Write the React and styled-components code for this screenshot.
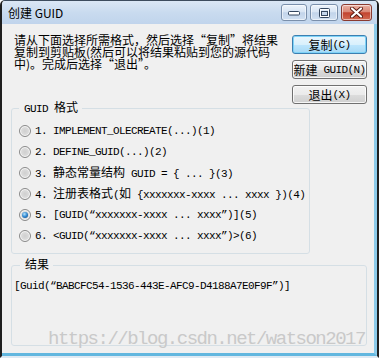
import React from 'react';
import styled, { createGlobalStyle } from 'styled-components';

// 폰트
const CJK = '"Noto Sans CJK SC", "Noto Sans", sans-serif';
const MONO = '"Liberation Mono", "Noto Sans CJK SC", monospace';

const GlobalStyle = createGlobalStyle`
    html, body { margin : 0; padding : 0; background : #ffffff; }
    #root { width : 379px; height : 358px; }
`;

// 중문 텍스트 조각
const Cn = styled.span`
    font-family : ${CJK};
    font-size : 12px;
    letter-spacing : 0;
`;

const FORMATS = [
    { id : 1, label : <>1. IMPLEMENT_OLECREATE(...)(1)</> },
    { id : 2, label : <>2. DEFINE_GUID(...)(2)</> },
    { id : 3, label : <>3. <Cn>静态常量结构</Cn> GUID = {'{'} ... {'}'}(3)</> },
    { id : 4, label : <>4. <Cn>注册表格式</Cn>(<Cn>如</Cn> {'{'}xxxxxxx-xxxx ... xxxx {'}'})(4)</> },
    { id : 5, label : <>5. [GUID(“xxxxxxx-xxxx ... xxxx”)](5)</> },
    { id : 6, label : <>6. &lt;GUID(“xxxxxxx-xxxx ... xxxx”)&gt;(6)</> },
];

const App = () => {
    const selected = 5;

    return (
        <>
            <GlobalStyle />
            <Window>
                {/* 타이틀 바 */}
                <TitleBar>
                    <TitleText>创建 GUID</TitleText>
                    <CaptionButtons>
                        <CaptionButton $w={26}>
                            <svg width="12" height="6" viewBox="0 0 12 6">
                                <rect x="0.5" y="1.5" width="11" height="3.5" rx="1" fill="#fff" stroke="#34465e" />
                            </svg>
                        </CaptionButton>
                        <CaptionButton $w={28}>
                            <svg width="11" height="10" viewBox="0 0 11 10">
                                <rect x="0.5" y="0.5" width="10" height="9" rx="1" fill="none" stroke="#34465e" />
                                <rect x="1.5" y="1.5" width="8" height="7" fill="none" stroke="#fff" />
                                <rect x="2.5" y="3.5" width="6" height="4" fill="none" stroke="#34465e" />
                            </svg>
                        </CaptionButton>
                        <CaptionButton $w={31} $close>
                            <svg width="13" height="11" viewBox="0 0 13 11">
                                <path d="M2 1.5 L11 9.5 M11 1.5 L2 9.5" stroke="#5a1a12" strokeWidth="4" strokeLinecap="round" />
                                <path d="M2 1.5 L11 9.5 M11 1.5 L2 9.5" stroke="#fff" strokeWidth="2.2" strokeLinecap="round" />
                            </svg>
                        </CaptionButton>
                    </CaptionButtons>
                </TitleBar>

                {/* 클라이언트 영역 */}
                <Client>
                    <TopRow>
                        <Intro>
                            请从下面选择所需格式，然后选择“复制”将结果<br />
                            复制到剪贴板(然后可以将结果粘贴到您的源代码<br />
                            中)。完成后选择“退出”。
                        </Intro>
                        <ButtonColumn>
                            <DialogButton $default><Cn>复制</Cn>(C)</DialogButton>
                            <DialogButton><Cn>新建</Cn> GUID(N)</DialogButton>
                            <DialogButton><Cn>退出</Cn>(X)</DialogButton>
                        </ButtonColumn>
                    </TopRow>

                    {/* GUID 형식 선택 */}
                    <FormatGroup>
                        <GroupLabel>GUID <Cn>格式</Cn></GroupLabel>
                        {FORMATS.map((item) => (
                            <OptionRow key={item.id}>
                                <Radio $checked={item.id === selected} />
                                <OptionText>{item.label}</OptionText>
                            </OptionRow>
                        ))}
                    </FormatGroup>

                    {/* 결과 */}
                    <ResultGroup>
                        <GroupLabel $offset={6}><Cn>结果</Cn></GroupLabel>
                        <ResultText>[Guid(“BABCFC54-1536-443E-AFC9-D4188A7E0F9F”)]</ResultText>
                    </ResultGroup>

                    <Watermark>https://blog.csdn.net/watson2017</Watermark>
                </Client>
            </Window>
        </>
    );
};

// Frame
const Window = styled.div`
    display : flex;
    flex-direction : column;
    width : 379px;
    height : 358px;
    box-sizing : border-box;
    border-left : 2px solid #1f1f1f;
    border-right : 2px solid #1f1f1f;
    border-top : 1px solid #3d4c5e;
    border-bottom : 2px solid #dfeaf3;
    border-radius : 5px 5px 0 0;
    overflow : hidden;
    background : #f0f0f0;
`;

const TitleBar = styled.div`
    display : flex;
    height : 23px;
    flex-shrink : 0;
    padding : 0 5px 0 6px;
    justify-content : space-between;
    align-items : flex-start;
    background : linear-gradient(#dbe7f5 0%, #c9dbef 50%, #c0d4ec 100%);
    border-bottom : 0;
`;

const TitleText = styled.div`
    height : 23px;
    line-height : 23px;
    font-family : ${CJK};
    font-size : 12px;
    color : #000;
`;

const CaptionButtons = styled.div`
    display : flex;
    margin-top : 3px;
    gap : 3px;
`;

const CaptionButton = styled.div`
    display : flex;
    width : ${(p) => p.$w}px;
    height : 17px;
    box-sizing : border-box;
    justify-content : center;
    align-items : center;
    border-radius : 3px;
    border : 1px solid ${(p) => (p.$close ? '#8a3a30' : '#7a8fab')};
    background : ${(p) => (p.$close
        ? 'linear-gradient(#eab0a3 0%, #da8876 45%, #c2432f 52%, #d26a52 100%)'
        : 'linear-gradient(#eef4fb 0%, #d8e5f4 45%, #c2d4ea 52%, #d1e0f2 100%)')};
    box-shadow : inset 0 0 0 1px rgba(255, 255, 255, 0.55);
`;

const Client = styled.div`
    position : relative;
    display : flex;
    flex : 1;
    flex-direction : column;
    min-height : 0;
    padding : 10px 7px 7px 9px;
    border-right : 3px solid #8ccbea;
    border-bottom : 3px solid #62b7df;
    background : #f0f0f0;
    color : #000;
`;

const TopRow = styled.div`
    display : flex;
    height : 70px;
    justify-content : space-between;
    align-items : flex-start;
`;

const Intro = styled.div`
    padding-left : 3px;
    font-family : ${CJK};
    font-size : 12px;
    line-height : 12px;
    white-space : nowrap;
`;

const ButtonColumn = styled.div`
    display : flex;
    flex-direction : column;
    margin-top : 1px;
    gap : 6px;
`;

const DialogButton = styled.button`
    display : flex;
    width : 75px;
    height : 19px;
    padding : 0;
    box-sizing : border-box;
    justify-content : center;
    align-items : center;
    border-radius : 3px;
    border : 1px solid ${(p) => (p.$default ? '#3c7fb1' : '#707070')};
    background : ${(p) => (p.$default
        ? 'linear-gradient(#eaf6fd 0%, #d9f0fc 50%, #bee6fd 50%, #a7d9f5 100%)'
        : 'linear-gradient(#f2f2f2 0%, #ebebeb 50%, #dddddd 50%, #cfcfcf 100%)')};
    box-shadow : inset 0 0 0 1px ${(p) => (p.$default ? '#7fd3f7' : 'rgba(255, 255, 255, 0.8)')};
    font-family : ${MONO};
    font-size : 11px;
    letter-spacing : -0.6px;
    line-height : 12px;
    color : #000;
    white-space : pre;
`;

// 그룹 박스
const FormatGroup = styled.fieldset`
    width : 299px;
    margin : -3px 0 0 0;
    padding : 5px 0 7px 7px;
    box-sizing : border-box;
    min-width : 0;
    border : 1px solid #d5dfe5;
    border-radius : 3px;
`;

const ResultGroup = styled.fieldset`
    flex : 1;
    margin : 4px 0 0 0;
    padding : 8px 0 0 2px;
    box-sizing : border-box;
    min-width : 0;
    border : 1px solid #d5dfe5;
    border-radius : 3px;
`;

const GroupLabel = styled.legend`
    margin-left : ${(p) => p.$offset || 0}px;
    padding : 0 4px 0 5px;
    font-family : ${MONO};
    font-size : 11px;
    letter-spacing : -0.6px;
    line-height : 12px;
    white-space : pre;
`;

const OptionRow = styled.div`
    display : flex;
    height : 21px;
    align-items : center;
    gap : 4px;
`;

const Radio = styled.span`
    position : relative;
    flex-shrink : 0;
    width : 12px;
    height : 12px;
    box-sizing : border-box;
    border-radius : 50%;
    border : 1px solid #8a8a8a;
    background : radial-gradient(circle at 50% 50%, #cfcfcf 0%, #dcdcdc 55%, #f2f2f2 100%);
    box-shadow : inset 0 0 0 1px #f6f6f6;
    &::after {
        content : '';
        display : ${(p) => (p.$checked ? 'block' : 'none')};
        position : absolute;
        inset : 2px;
        border-radius : 50%;
        background : radial-gradient(circle at 40% 35%, #b6e4fb 0%, #2f86d0 50%, #0d3e78 100%);
    }
`;

const OptionText = styled.span`
    font-family : ${MONO};
    font-size : 11px;
    letter-spacing : -0.6px;
    line-height : 12px;
    white-space : pre;
`;

const ResultText = styled.div`
    font-family : ${MONO};
    font-size : 11px;
    letter-spacing : -0.6px;
    line-height : 12px;
    white-space : pre;
`;

// 워터마크 (겹쳐 표시)
const Watermark = styled.div`
    position : absolute;
    left : 46px;
    top : 306px;
    font-family : "Liberation Mono", monospace;
    font-size : 19px;
    line-height : 19px;
    letter-spacing : -1.5px;
    color : #c9c9c9;
    white-space : pre;
    pointer-events : none;
`;

export default App;
